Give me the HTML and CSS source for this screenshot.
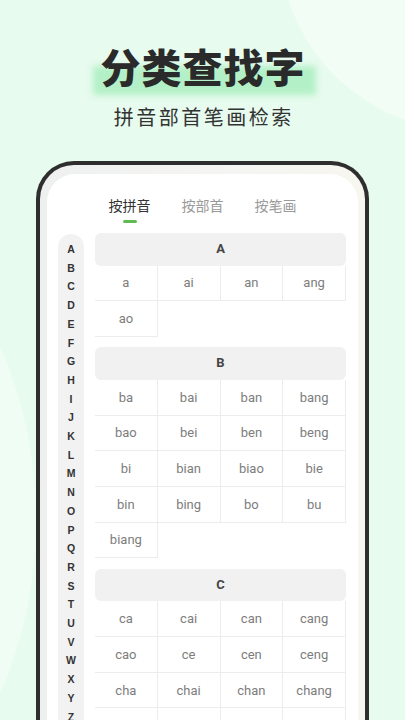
FILE: index.html
```html
<!DOCTYPE html>
<html lang="zh">
<head>
<meta charset="utf-8">
<title>分类查找字</title>
<link rel="stylesheet" href="styles.css">
</head>
<body>
<div class="page">
  <header class="hero">
    <h1 class="title"><span class="title-text">分类查找字</span></h1>
    <p class="subtitle">拼音部首笔画检索</p>
  </header>
  <div class="phone">
    <div class="screen">
      <nav class="tabs">
        <div class="tab active">按拼音</div>
        <div class="tab">按部首</div>
        <div class="tab">按笔画</div>
      </nav>
      <div class="content">
        <ul class="index">
          <li>A</li><li>B</li><li>C</li><li>D</li><li>E</li><li>F</li><li>G</li><li>H</li><li>I</li><li>J</li><li>K</li><li>L</li><li>M</li><li>N</li><li>O</li><li>P</li><li>Q</li><li>R</li><li>S</li><li>T</li><li>U</li><li>V</li><li>W</li><li>X</li><li>Y</li><li>Z</li>
        </ul>
        <div class="sections">
          <section class="group">
            <div class="group-head">A</div>
            <div class="cells">
              <div class="cell">a</div><div class="cell">ai</div><div class="cell">an</div><div class="cell">ang</div>
              <div class="cell">ao</div>
            </div>
          </section>
          <section class="group">
            <div class="group-head">B</div>
            <div class="cells">
              <div class="cell">ba</div><div class="cell">bai</div><div class="cell">ban</div><div class="cell">bang</div>
              <div class="cell">bao</div><div class="cell">bei</div><div class="cell">ben</div><div class="cell">beng</div>
              <div class="cell">bi</div><div class="cell">bian</div><div class="cell">biao</div><div class="cell">bie</div>
              <div class="cell">bin</div><div class="cell">bing</div><div class="cell">bo</div><div class="cell">bu</div>
              <div class="cell">biang</div>
            </div>
          </section>
          <section class="group">
            <div class="group-head">C</div>
            <div class="cells">
              <div class="cell">ca</div><div class="cell">cai</div><div class="cell">can</div><div class="cell">cang</div>
              <div class="cell">cao</div><div class="cell">ce</div><div class="cell">cen</div><div class="cell">ceng</div>
              <div class="cell">cha</div><div class="cell">chai</div><div class="cell">chan</div><div class="cell">chang</div>
              <div class="cell"></div><div class="cell"></div><div class="cell"></div><div class="cell"></div>
            </div>
          </section>
        </div>
      </div>
    </div>
  </div>
</div>
</body>
</html>
```

FILE: styles.css
```css
html, body {
  margin: 0;
  padding: 0;
}

body {
  width: 405px;
  height: 720px;
  overflow: hidden;
  background:
    radial-gradient(circle 192px at 470px -60px, #f2fdf6 99.3%, rgba(242,253,246,0) 100%),
    radial-gradient(circle 437px at -400px 520px, #f0fdf5 99.6%, rgba(240,253,245,0) 100%),
    #e7fbee;
  font-family: "Noto Sans CJK SC", "Noto Sans", sans-serif;
}

.hero {
  text-align: center;
  padding-top: 42px;
}

.title {
  margin: 0;
  font-size: 40px;
  line-height: 48px;
  font-weight: 900;
  color: #2a2a2a;
}

.title-text {
  position: relative;
  display: inline-block;
  isolation: isolate;
  letter-spacing: 1px;
  padding-left: 1px;
}

.title-text::before {
  content: "";
  position: absolute;
  left: -7px;
  right: -10px;
  top: 24px;
  bottom: -5px;
  background: #b3f0c7;
  filter: blur(3px);
  z-index: -1;
}

.subtitle {
  margin: 13px 0 0;
  font-size: 20px;
  line-height: 28px;
  letter-spacing: 2.5px;
  padding-left: 2.5px;
  color: #333;
  font-weight: 400;
}

.phone {
  margin: 30px 0 0 36px;
  width: 333px;
  height: 620px;
  box-sizing: border-box;
  border: 4px solid #2e2e2e;
  border-bottom: none;
  border-radius: 38px 38px 0 0;
  background: linear-gradient(90deg, #eef0ef 0%, #f4f5f3 50%, #f7f6ef 100%);
  padding: 9px 7px 0;
}

.screen {
  height: 100%;
  background: #fff;
  border-radius: 28px 28px 0 0;
}

.tabs {
  display: flex;
  justify-content: center;
  align-items: flex-start;
  gap: 31px;
  padding-top: 21px;
}

.tab {
  display: flex;
  flex-direction: column;
  align-items: center;
  font-size: 14px;
  line-height: 20px;
  color: #9a9a9a;
}

.tab.active {
  color: #333;
}

.tab.active::after {
  content: "";
  width: 14px;
  height: 3px;
  border-radius: 2px;
  background: #5dbb4f;
  margin-top: 5px;
}

.content {
  display: flex;
  align-items: flex-start;
  gap: 11px;
  margin-top: 10px;
  padding: 0 12px 0 11px;
}

.index {
  list-style: none;
  margin: 1px 0 0;
  padding: 6px 0 0;
  width: 26px;
  flex: none;
  background: #f2f2f2;
  border-radius: 13px 13px 0 0;
  font-family: "Liberation Sans", Arial, sans-serif;
  font-weight: 700;
  font-size: 10.5px;
  line-height: 18.7px;
  color: #333;
  text-align: center;
}

.sections {
  flex: 1;
  min-width: 0;
}

.group + .group {
  margin-top: 10.5px;
}

.group-head {
  height: 32.5px;
  line-height: 32.5px;
  background: #f0f1f0;
  border-radius: 6px;
  text-align: center;
  font-family: Roboto, "Liberation Sans", sans-serif;
  font-weight: 700;
  font-size: 13px;
  color: #444;
}

.cells {
  display: grid;
  grid-template-columns: repeat(4, 1fr);
}

.cell {
  height: 35.7px;
  box-sizing: border-box;
  border-right: 1px solid #ececec;
  border-bottom: 1px solid #ececec;
  display: flex;
  align-items: center;
  justify-content: center;
  font-family: Roboto, "Liberation Sans", sans-serif;
  font-size: 13px;
  color: #7d7d7d;
}
```
